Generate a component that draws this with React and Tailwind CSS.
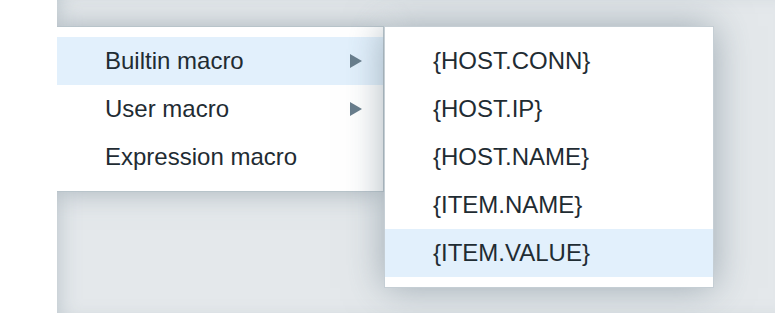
import React from 'react'

const MAIN_ITEMS = [
  { label: 'Builtin macro', sub: true, active: true },
  { label: 'User macro', sub: true },
  { label: 'Expression macro' },
]

const SUB_ITEMS = ['{HOST.CONN}', '{HOST.IP}', '{HOST.NAME}', '{ITEM.NAME}', '{ITEM.VALUE}']

const Arrow = () => (
  <svg width="12" height="14" viewBox="0 0 12 14" className="text-[#687d8c]">
    <path d="M0 0 L12 7 L0 14 Z" fill="currentColor" />
  </svg>
)

export default function App() {
  return (
    <div className="flex w-[775px] h-[313px] bg-white overflow-hidden font-['Liberation_Sans',Arial,sans-serif] text-[#1f2c33]">
      <div className="w-[57px] shrink-0" />
      <div className="relative flex-1 overflow-hidden bg-[#e4e8eb] shadow-[inset_12px_0_20px_-10px_rgba(150,165,175,0.5)]">
        {/* main menu */}
        <ul className="absolute left-0 top-[27px] w-[326px] py-[10px] bg-white shadow-[0_0_0_1px_rgba(180,192,200,0.7),0_0_26px_rgba(110,128,140,0.55)]">
          {MAIN_ITEMS.map((item) => (
            <li
              key={item.label}
              className={`flex items-center justify-between h-[48px] pl-[48px] pr-[21px] text-[24px] ${item.active ? 'bg-[#e2f0fc]' : ''}`}
            >
              <span>{item.label}</span>
              {item.sub && <Arrow />}
            </li>
          ))}
        </ul>

        {/* submenu */}
        <ul className="absolute left-[327px] top-[26px] w-[330px] py-[10px] bg-white border border-[#c5ced4] shadow-[0_0_36px_rgba(110,128,140,0.6)]">
          {SUB_ITEMS.map((item, i) => (
            <li
              key={item}
              className={`flex items-center h-[48px] pl-[48px] text-[24px] ${i === SUB_ITEMS.length - 1 ? 'bg-[#e2f0fc]' : ''}`}
            >
              {item}
            </li>
          ))}
        </ul>
      </div>
    </div>
  )
}
